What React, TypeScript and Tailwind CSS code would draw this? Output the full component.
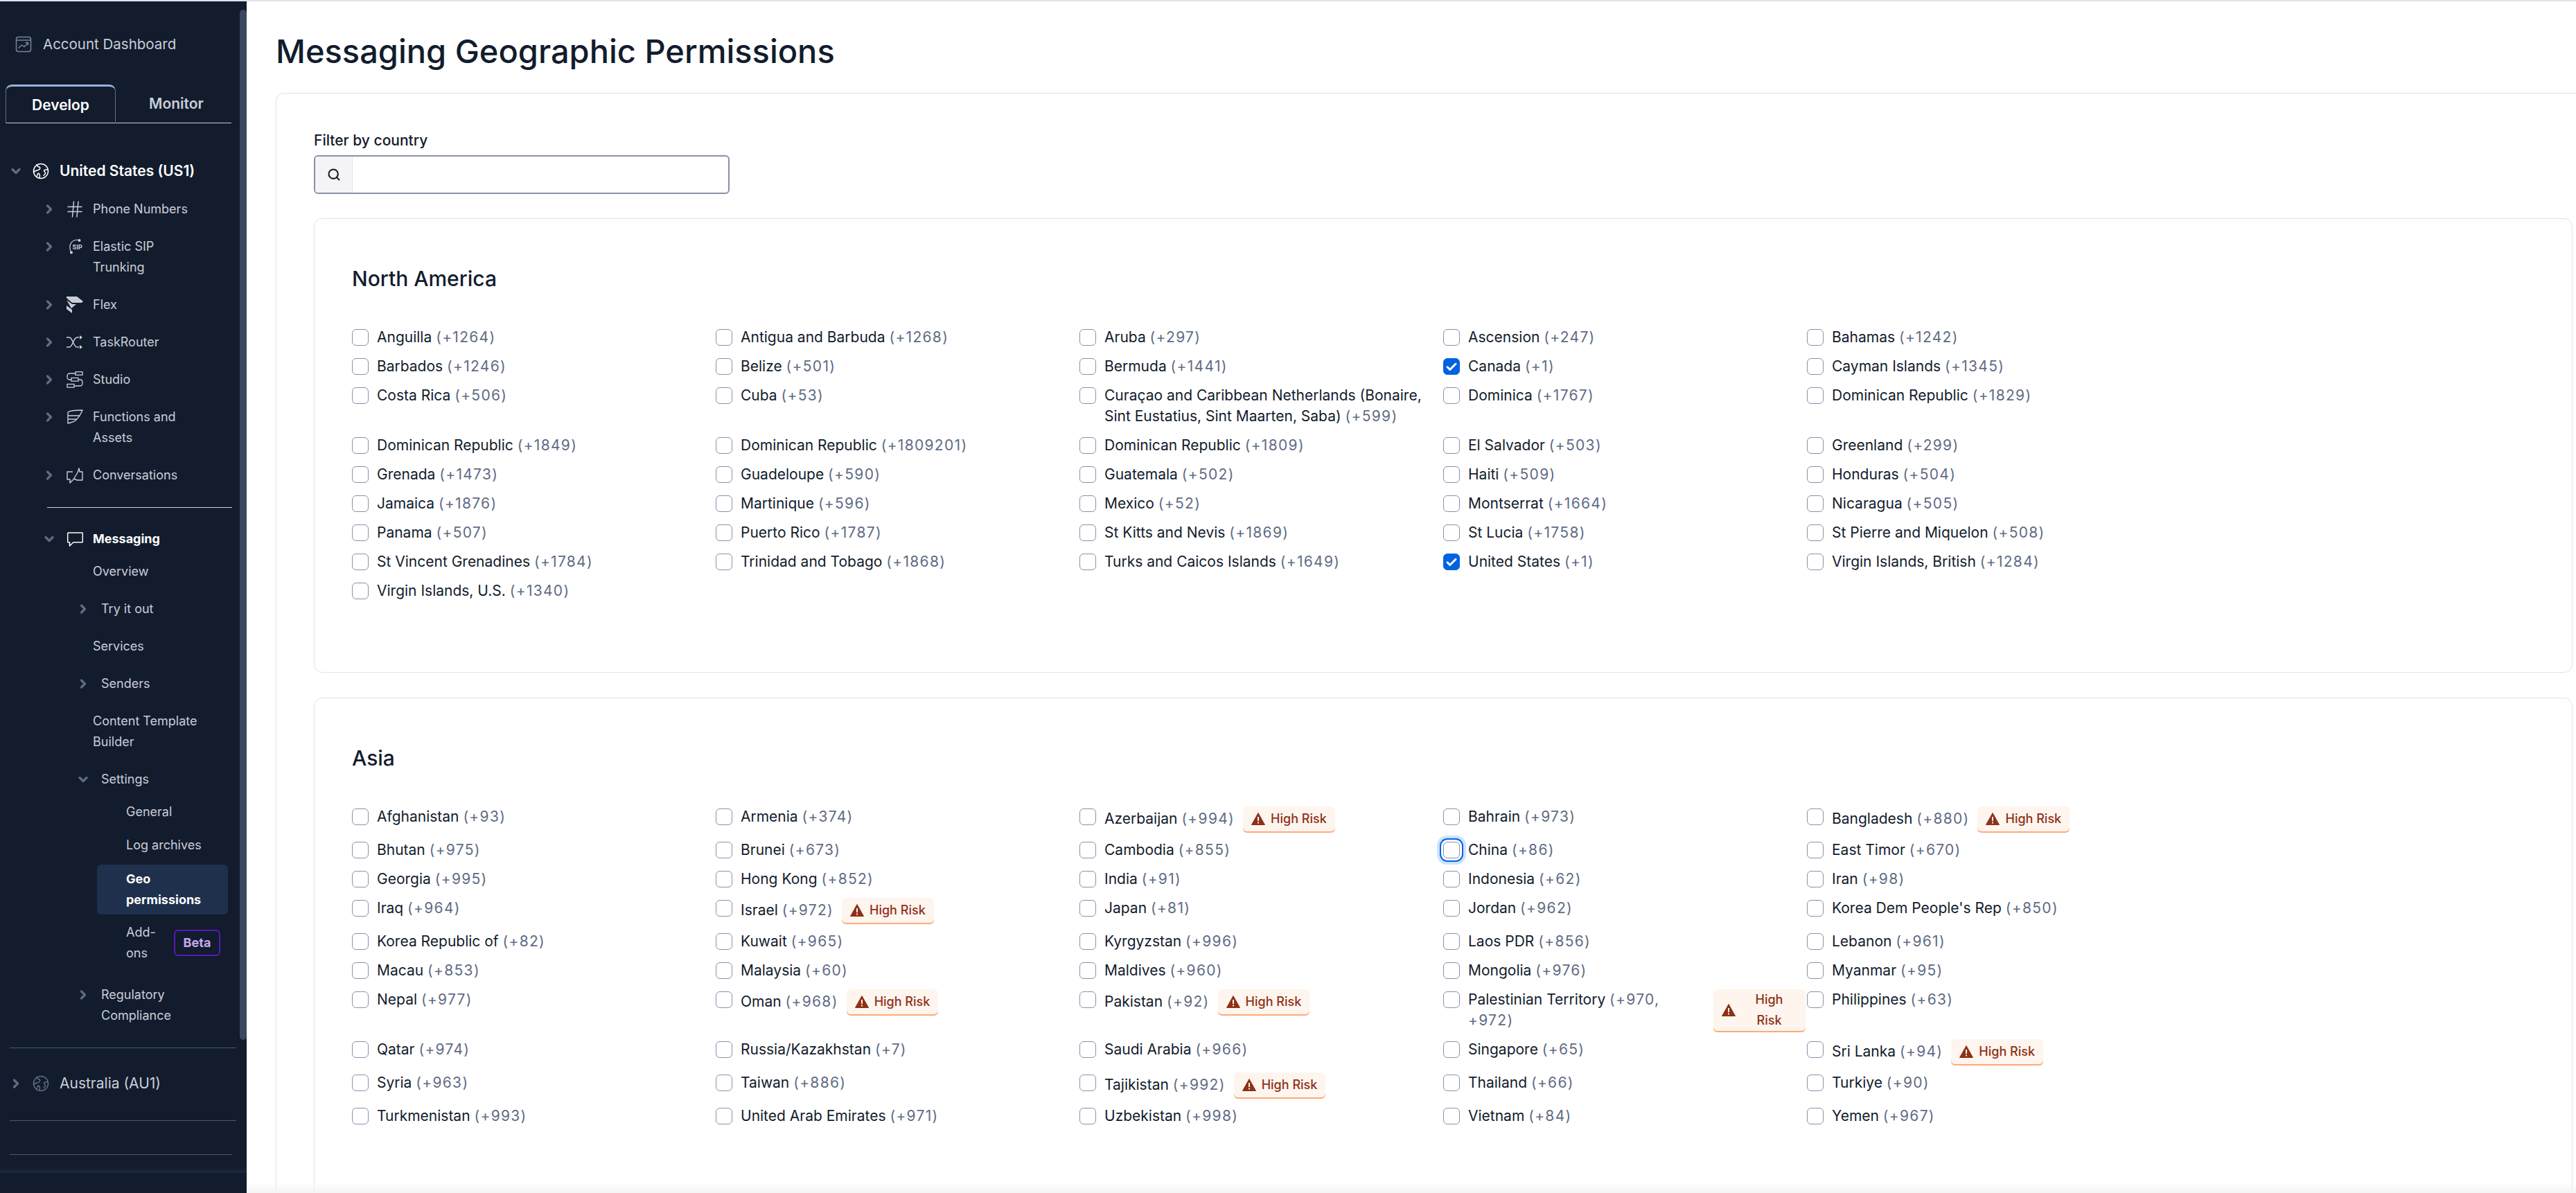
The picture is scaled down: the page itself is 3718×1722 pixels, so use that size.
import React from 'react';
import { Search, ChevronRight, ChevronDown } from 'lucide-react';

type Country = { name: string; code: string; checked?: boolean; focus?: boolean; risk?: boolean; narrow?: boolean };

const c = (name: string, code: string, extra: Partial<Country> = {}): Country => ({ name, code, ...extra });

const northAmerica: Country[] = [
  c('Anguilla', '+1264'), c('Antigua and Barbuda', '+1268'), c('Aruba', '+297'), c('Ascension', '+247'), c('Bahamas', '+1242'),
  c('Barbados', '+1246'), c('Belize', '+501'), c('Bermuda', '+1441'), c('Canada', '+1', { checked: true }), c('Cayman Islands', '+1345'),
  c('Costa Rica', '+506'), c('Cuba', '+53'), c('Curaçao and Caribbean Netherlands (Bonaire, Sint Eustatius, Sint Maarten, Saba)', '+599'), c('Dominica', '+1767'), c('Dominican Republic', '+1829'),
  c('Dominican Republic', '+1849'), c('Dominican Republic', '+1809201'), c('Dominican Republic', '+1809'), c('El Salvador', '+503'), c('Greenland', '+299'),
  c('Grenada', '+1473'), c('Guadeloupe', '+590'), c('Guatemala', '+502'), c('Haiti', '+509'), c('Honduras', '+504'),
  c('Jamaica', '+1876'), c('Martinique', '+596'), c('Mexico', '+52'), c('Montserrat', '+1664'), c('Nicaragua', '+505'),
  c('Panama', '+507'), c('Puerto Rico', '+1787'), c('St Kitts and Nevis', '+1869'), c('St Lucia', '+1758'), c('St Pierre and Miquelon', '+508'),
  c('St Vincent Grenadines', '+1784'), c('Trinidad and Tobago', '+1868'), c('Turks and Caicos Islands', '+1649'), c('United States', '+1', { checked: true }), c('Virgin Islands, British', '+1284'),
  c('Virgin Islands, U.S.', '+1340'),
];

const asia: Country[] = [
  c('Afghanistan', '+93'), c('Armenia', '+374'), c('Azerbaijan', '+994', { risk: true }), c('Bahrain', '+973'), c('Bangladesh', '+880', { risk: true }),
  c('Bhutan', '+975'), c('Brunei', '+673'), c('Cambodia', '+855'), c('China', '+86', { focus: true }), c('East Timor', '+670'),
  c('Georgia', '+995'), c('Hong Kong', '+852'), c('India', '+91'), c('Indonesia', '+62'), c('Iran', '+98'),
  c('Iraq', '+964'), c('Israel', '+972', { risk: true }), c('Japan', '+81'), c('Jordan', '+962'), c("Korea Dem People's Rep", '+850'),
  c('Korea Republic of', '+82'), c('Kuwait', '+965'), c('Kyrgyzstan', '+996'), c('Laos PDR', '+856'), c('Lebanon', '+961'),
  c('Macau', '+853'), c('Malaysia', '+60'), c('Maldives', '+960'), c('Mongolia', '+976'), c('Myanmar', '+95'),
  c('Nepal', '+977'), c('Oman', '+968', { risk: true }), c('Pakistan', '+92', { risk: true }), c('Palestinian Territory', '+970, +972', { risk: true, narrow: true }), c('Philippines', '+63'),
  c('Qatar', '+974'), c('Russia/Kazakhstan', '+7'), c('Saudi Arabia', '+966'), c('Singapore', '+65'), c('Sri Lanka', '+94', { risk: true }),
  c('Syria', '+963'), c('Taiwan', '+886'), c('Tajikistan', '+992', { risk: true }), c('Thailand', '+66'), c('Turkiye', '+90'),
  c('Turkmenistan', '+993'), c('United Arab Emirates', '+971'), c('Uzbekistan', '+998'), c('Vietnam', '+84'), c('Yemen', '+967'),
];

const Right = () => <ChevronRight size={20} strokeWidth={4} className="text-[#606b85] shrink-0" />;
const Down = () => <ChevronDown size={20} strokeWidth={4} className="text-[#606b85] shrink-0" />;

const svgProps = { fill: 'none', stroke: 'currentColor', strokeWidth: 1.5, strokeLinecap: 'round', strokeLinejoin: 'round', viewBox: '0 0 24 24' } as const;

const DashboardIcon = () => (
  <svg {...svgProps} className="w-6 h-6 text-[#7a849c]">
    <rect x="1.5" y="1.5" width="21" height="21" rx="3" />
    <path d="M1.5 6h21M5 17l4.5-4 3.5 2.500 5.500-5.500M15 9.500h3.500V13" />
  </svg>
);

const GlobeIcon = ({ className }: { className: string }) => (
  <svg {...svgProps} className={className}>
    <circle cx="12" cy="12" r="10.500" />
    <path d="M6 2.800c.5 2.200 2.500 3 4.500 3.700 1 2.500-1.500 4-4 4.500-2.500.5-4.500 2-5 3M22 9.500c-2 .5-4 0-5.500 1.500.5 2 2 2.500 2 4.500-.5 1.500-2 1.500-2.500 3M6 20c1-2 .5-4 2.500-5 2 1 2.500 3 1.500 6.500" />
  </svg>
);

const HashIcon = () => (
  <svg {...svgProps} className="w-6 h-6">
    <path d="M2 8.500h20M2 15.500h20M8.500 23l2-22M15 23l2-22" />
  </svg>
);

const SipIcon = () => (
  <svg viewBox="0 0 24 24" className="w-6 h-6" fill="currentColor">
    <path d="M18 2.500C9 1 1.500 8 6.500 20" fill="none" stroke="currentColor" strokeWidth="1.200" />
    <circle cx="18.500" cy="3" r="2" />
    <circle cx="7" cy="20.500" r="2" />
    <text x="8.500" y="15.500" fontSize="9" fontWeight="700" fontFamily="Inter, sans-serif">SIP</text>
  </svg>
);

const FlexIcon = () => (
  <svg viewBox="0 0 24 24" className="w-6 h-6" fill="currentColor">
    <path d="M0 0h15l9 7-2 2H8L0 2z" />
    <path d="M0 5l8 6 6 0-7 6zM0 13l8 6v5l-8-6z" />
  </svg>
);

const TaskRouterIcon = () => (
  <svg viewBox="0 0 24 24" className="w-6 h-6" fill="none" stroke="currentColor" strokeWidth="1.500">
    <path d="M0 5h4c5 0 6 14 11 14h3M0 19h4c5 0 6-14 11-14h3" />
    <path d="M19 2l4 3-4 3zM19 16l4 3-4 3z" fill="currentColor" stroke="none" />
  </svg>
);

const StudioIcon = () => (
  <svg viewBox="0 0 24 24" className="w-6 h-6" fill="none" stroke="currentColor" strokeWidth="1.300">
    <rect x="13" y="0.700" width="10" height="4.600" />
    <rect x="7" y="9.500" width="10" height="4.600" />
    <rect x="1" y="18.500" width="10" height="4.600" />
    <path d="M13 3H4C0 3 0 12 4 12h3M17 12h3c4 0 4 9 0 9h-9" />
  </svg>
);

const FunctionsIcon = () => (
  <svg viewBox="0 0 24 24" className="w-6 h-6" fill="none" stroke="currentColor" strokeWidth="1.400" strokeLinejoin="round">
    <path d="M2 5c4-3 12-3 21-3-2 5-5 10-9 14-3 3-7 4-12 5z" />
    <path d="M2 10h17M2 15h12" />
  </svg>
);

const ConversationsIcon = () => (
  <svg viewBox="0 0 24 24" className="w-6 h-6" fill="none" stroke="currentColor" strokeWidth="1.400" strokeLinejoin="round">
    <path d="M9 7H1v11h4v5l5-5 6-10 2-6 1 5h4v12h-8l-4-2" />
  </svg>
);

const MessagingIcon = () => (
  <svg viewBox="0 0 24 24" className="w-6 h-6" fill="none" stroke="currentColor" strokeWidth="1.500" strokeLinejoin="round">
    <path d="M2.500 3h20c.5 0 .8.300.8.800V16c0 .5-.3.800-.8.800H10L4.500 22v-5.200h-2c-.5 0-.8-.3-.8-.8V3.800c0-.5.300-.8.800-.8z" />
  </svg>
);

const Checkbox = ({ checked, focus }: { checked?: boolean; focus?: boolean }) => (
  <div
    className={`w-6 h-6 mt-[3px] shrink-0 rounded-[6px] flex items-center justify-center border-[1.5px] ${
      checked ? 'bg-[#0263e0] border-[#0263e0]' : 'bg-white border-[#8891aa]'
    } ${focus ? 'shadow-[0_0_0_3px_#ffffff,0_0_0_5px_#0263e0,0_0_0_9px_#cce4ff]' : ''}`}
  >
    {checked && (
      <svg viewBox="0 0 24 24" className="w-[18px] h-[18px]" fill="none" stroke="white" strokeWidth="4" strokeLinecap="round" strokeLinejoin="round">
        <path d="M4 13l5 5L20 7" />
      </svg>
    )}
  </div>
);

const AlertTriangleFilled = () => (
  <svg viewBox="0 0 20 20" className="w-[20px] h-[20px] shrink-0">
    <path d="M10 1.500L19.500 18.500H.5z" fill="#8d3118" stroke="#8d3118" strokeLinejoin="round" />
    <rect x="9" y="7" width="2" height="6" fill="#fef5ee" />
    <rect x="9" y="14.500" width="2" height="2" fill="#fef5ee" />
  </svg>
);

const RiskBadge = ({ narrow }: { narrow?: boolean }) => (
  <div
    className={`ml-3 flex items-center gap-[8px] rounded-[6px] bg-[#fef5ee] px-[12px] text-center text-[18px] leading-[30px] font-medium text-[#8d3118] shadow-[0_2px_0_0_#fdaa7a] ${
      narrow ? 'w-[133px] shrink-0' : 'py-[3px]'
    }`}
  >
    <AlertTriangleFilled />
    <span className={narrow ? 'w-[60px] mx-auto' : ''}>High Risk</span>
  </div>
);

const CountryCell = ({ country }: { country: Country }) => (
  <div className="flex items-start gap-3">
    <Checkbox checked={country.checked} focus={country.focus} />
    <div className="flex items-center flex-1 min-w-0">
      <span className={`text-[21px] leading-[30px] text-[#121c2d] ${country.narrow ? 'w-[342px] shrink-0' : ''}`}>
        {country.name} <span className="text-[#606b85] tracking-[1.3px]">({country.code})</span>
      </span>
      {country.risk && <RiskBadge narrow={country.narrow} />}
    </div>
  </div>
);

const Region = ({ title, countries, className }: { title: string; countries: Country[]; className: string }) => (
  <section className={`rounded-[12px] border border-[#e1e3ea] bg-white pt-[65px] pl-[54px] ${className}`}>
    <h2 className="text-[30px] leading-[42px] font-medium text-[#121c2d] mb-[49px]">{title}</h2>
    <div className="grid grid-cols-5 w-[2625px] gap-y-3">
      {countries.map((country, index) => (
        <CountryCell key={index} country={country} />
      ))}
    </div>
  </section>
);

const NavItem = ({
  chevron,
  icon,
  label,
  className = '',
}: {
  chevron?: 'right' | 'down';
  icon?: React.ReactNode;
  label: string;
  className?: string;
}) => (
  <div className={`flex items-start pl-[61px] text-[18px] leading-[30px] text-[#cacdd8] ${className}`}>
    <div className="w-[20px] h-[30px] flex items-center">{chevron === 'right' ? <Right /> : chevron === 'down' ? <Down /> : null}</div>
    <div className="w-[53px] h-[30px] flex items-center pl-[15px]">{icon}</div>
    <span className="w-[165px]">{label}</span>
  </div>
);

const SubItem = ({ chevron, label, className = '' }: { chevron?: 'right' | 'down'; label: string; className?: string }) => (
  <div className={`flex items-start pl-[110px] text-[18px] leading-[30px] text-[#cacdd8] ${className}`}>
    <div className="w-[36px] h-[30px] flex items-center">{chevron === 'right' ? <Right /> : <Down />}</div>
    <span className="w-[130px]">{label}</span>
  </div>
);

const Sidebar = () => (
  <aside className="relative w-[356px] shrink-0 bg-[#121c2d] flex flex-col overflow-hidden">
    <div className="absolute right-0 top-[12px] w-[10px] h-[1487px] rounded-full bg-[#39475f]" />

    <div className="flex items-center gap-[16px] pl-[22px] pt-[47px] text-[20.500px] leading-[30px] text-[#cacdd8]">
      <DashboardIcon />
      <span>Account Dashboard</span>
    </div>

    <div className="mt-[43px] ml-[8px] w-[326px] h-[56px] flex border-b border-[#cacdd8]">
      <div className="w-[159px] h-[56px] rounded-t-[9px] border-x border-[#606b85] border-t-[3px] border-t-[#99b2d6] flex items-center justify-center text-[21px] font-semibold text-white">
        Develop
      </div>
      <div className="flex-1 flex items-center justify-center pl-[8px] text-[21px] font-semibold text-[#cacdd8]">Monitor</div>
    </div>

    <div className="mt-[54px] flex items-center pl-[13px] text-[21px] leading-[30px] font-semibold text-white">
      <div className="w-[34px]"><Down /></div>
      <GlobeIcon className="w-6 h-6" />
      <span className="ml-[15px]">United States (US1)</span>
    </div>

    <div className="mt-[25px] flex flex-col gap-6">
      <NavItem chevron="right" icon={<HashIcon />} label="Phone Numbers" />
      <NavItem chevron="right" icon={<SipIcon />} label="Elastic SIP Trunking" />
      <NavItem chevron="right" icon={<FlexIcon />} label="Flex" />
      <NavItem chevron="right" icon={<TaskRouterIcon />} label="TaskRouter" />
      <NavItem chevron="right" icon={<StudioIcon />} label="Studio" />
      <NavItem chevron="right" icon={<FunctionsIcon />} label="Functions and Assets" />
      <NavItem chevron="right" icon={<ConversationsIcon />} label="Conversations" />
    </div>

    <div className="mt-[31px] ml-[68px] w-[267px] border-t border-[#cacdd8]" />

    <div className="mt-[30px] flex items-center pl-[61px] text-[18px] leading-[30px] font-bold text-white">
      <div className="w-[20px]"><Down /></div>
      <div className="w-[53px] pl-[15px] flex items-center"><MessagingIcon /></div>
      <span>Messaging</span>
    </div>

    <div className="mt-[17px] flex flex-col gap-6">
      <NavItem label="Overview" />
      <SubItem chevron="right" label="Try it out" />
      <NavItem label="Services" />
      <SubItem chevron="right" label="Senders" />
      <NavItem label="Content Template Builder" />
      <SubItem chevron="down" label="Settings" />
    </div>

    <div className="mt-[17px] pl-[182px] text-[18px] leading-[30px] text-[#cacdd8]">General</div>
    <div className="mt-[18px] pl-[182px] text-[18px] leading-[30px] text-[#cacdd8]">Log archives</div>
    <div className="mt-[13px] ml-[140px] w-[189px] h-[72px] rounded-[6px] bg-[#1f304c] pl-[42px] py-[6px] text-[18px] leading-[30px] font-bold text-white">
      Geo
      <br />
      permissions
    </div>
    <div className="mt-[11px] ml-[182px] flex items-center text-[18px] leading-[30px] text-[#cacdd8]">
      <span className="w-[69px]">
        Add-
        <br />
        ons
      </span>
      <span className="w-[67px] h-[38px] rounded-[6px] border-2 border-[#5817bd] flex items-center justify-center text-[18px] font-bold text-[#c9a7f2]">
        Beta
      </span>
    </div>
    <SubItem chevron="right" label="Regulatory Compliance" className="mt-[30px]" />

    <div className="mt-[31px] ml-[14px] w-[327px] border-t border-[#4a5872]" />
    <div className="mt-[36px] flex items-center pl-[13px] text-[21px] leading-[30px] text-[#cacdd8]">
      <div className="w-[34px]"><Right /></div>
      <GlobeIcon className="w-6 h-6 text-[#606b85]" />
      <span className="ml-[15px]">Australia (AU1)</span>
    </div>
    <div className="mt-[38px] ml-[14px] w-[327px] border-t border-[#4a5872]" />
    <div className="mt-[48px] ml-[14px] w-[321px] border-t border-[#4a5872]" />
    <div className="mt-[18px] h-[8px] bg-gradient-to-t from-[#1d2a3e] to-[#121c2d]" />
  </aside>
);

export default function App() {
  return (
    <div className="relative h-[1722px] w-[3718px] overflow-hidden flex border-t-2 border-[#e1e3ea] bg-white font-['Inter',sans-serif]">
      <Sidebar />
      <main className="flex-1 min-w-0 pl-[42px]">
        <h1 className="h-[132px] pt-[44px] text-[47px] leading-[56px] font-medium text-[#121c2d]">Messaging Geographic Permissions</h1>
        <div className="rounded-tl-[12px] border-l border-t border-[#e1e3ea] pl-[54px] pr-[5px] pt-[53px]">
          <div className="text-[21px] leading-[30px] font-medium text-[#121c2d] mb-[6px]">Filter by country</div>
          <div className="w-[600px] h-[56px] flex rounded-[6px] border-2 border-[#8891aa] overflow-hidden bg-white">
            <div className="w-[54px] bg-[#f4f4f6] border-r border-[#e1e3ea] flex items-center justify-center">
              <Search size={20} strokeWidth={2.5} className="text-[#121c2d]" />
            </div>
            <input type="text" className="flex-1 outline-none" />
          </div>
          <Region title="North America" countries={northAmerica} className="mt-[35px] pb-[102px]" />
          <Region title="Asia" countries={asia} className="mt-[36px] pb-[102px]" />
        </div>
      </main>
      <div className="absolute left-[356px] right-0 bottom-0 h-[15px] bg-gradient-to-b from-transparent to-[#f4f4f6]" />
    </div>
  );
}
